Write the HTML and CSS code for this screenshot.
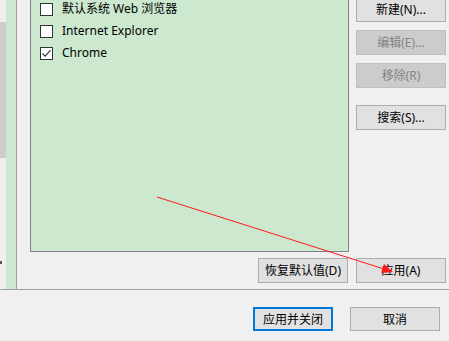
FILE: index.html
```html
<!DOCTYPE html>
<html>
<head>
<meta charset="utf-8">
<link rel="stylesheet" href="styles.css">
</head>
<body>
<div class="win">
  <div class="top">
    <div class="scroll">
      <div class="thumb"></div>
      <div class="mark"></div>
    </div>
    <div class="strip"></div>
    <div class="main">
      <div class="upper">
        <div class="list">
          <div class="rows">
            <div class="row"><span class="cb"></span><span>默认系统 Web 浏览器</span></div>
            <div class="row"><span class="cb"></span><span>Internet Explorer</span></div>
            <div class="row"><span class="cb checked"><svg width="11" height="11" viewBox="0 0 11 11"><path d="M1.5 5.5 L4.2 8.2 L9.5 2.2" fill="none" stroke="#333" stroke-width="1.1"/></svg></span><span>Chrome</span></div>
          </div>
        </div>
        <div class="side">
          <button class="btn first">新建(N)...</button>
          <button class="btn dis">编辑(E)...</button>
          <button class="btn dis">移除(R)</button>
          <button class="btn search">搜索(S)...</button>
        </div>
      </div>
      <div class="lower">
        <button class="btn reset">恢复默认值(D)</button>
        <button class="btn apply">应用(A)</button>
      </div>
    </div>
  </div>
  <div class="foot">
    <button class="btn ok">应用并关闭</button>
    <button class="btn cancel">取消</button>
  </div>
  <svg class="arrow" width="449" height="341" viewBox="0 0 449 341">
    <line x1="157" y1="197" x2="384" y2="269" stroke="#ff1a1a" stroke-width="1"/>
    <path d="M393 272 L381 273 L384 264 Z" fill="#ff1a1a"/>
  </svg>
</div>
</body>
</html>
```
FILE: styles.css
```css
html, body {
  margin: 0;
  padding: 0;
  background: #f0f0f0;
}
.win {
  position: relative;
  width: 449px;
  height: 341px;
  overflow: hidden;
  font-family: "Noto Sans", "Noto Sans CJK SC", sans-serif;
  font-size: 12px;
  color: #000;
}
.top {
  display: flex;
  height: 289px;
  border-bottom: 1px solid #a0a0a0;
}
.scroll {
  width: 6px;
  padding-top: 22px;
  box-sizing: border-box;
}
.thumb {
  width: 6px;
  height: 136px;
  background: #cdcdcd;
}
.mark {
  width: 2px;
  height: 3px;
  margin-top: 103px;
  background: #555;
}
.strip {
  width: 10px;
  background: #cce8cf;
  border-right: 1px solid #a0a0a0;
}
.main {
  flex: 1;
  padding-left: 13px;
  display: flex;
  flex-direction: column;
}
.upper {
  display: flex;
  gap: 7px;
  height: 252px;
}
.list {
  width: 319px;
  height: 252px;
  box-sizing: border-box;
  background: #cce8cf;
  border: 1px solid #7f8288;
  border-top: none;
}
.rows {
  margin-top: -2px;
  padding-left: 9px;
}
.row {
  height: 22px;
  display: flex;
  align-items: center;
  gap: 9px;
  line-height: 22px;
}
.cb {
  width: 11px;
  height: 11px;
  border: 1px solid #333;
  background: #fff;
  display: flex;
  align-items: center;
  justify-content: center;
}
.side {
  display: flex;
  flex-direction: column;
  margin-top: -3px;
}
.btn {
  width: 90px;
  height: 25px;
  box-sizing: border-box;
  background: #e1e1e1;
  border: 1px solid #adadad;
  font-family: "Noto Sans", "Noto Sans CJK SC", sans-serif;
  font-size: 12px;
  color: #000;
  padding: 0;
  line-height: 21px;
  margin-bottom: 8px;
}
.btn.dis {
  background: #cccccc;
  border-color: #bfbfbf;
  color: #838383;
}
.btn.search {
  margin-top: 9px;
}
.lower {
  display: flex;
  gap: 8px;
  padding-left: 228px;
  margin-top: 6px;
}
.lower .btn {
  margin: 0;
}
.foot {
  display: flex;
  padding-left: 253px;
  padding-top: 17px;
  gap: 17px;
}
.foot .btn {
  margin: 0;
  height: 24px;
}
.btn.ok {
  width: 80px;
  border: 2px solid #0078d7;
  line-height: 19px;
}
.btn.cancel {
  width: 90px;
}
.arrow {
  position: absolute;
  left: 0;
  top: 0;
  pointer-events: none;
}
```
